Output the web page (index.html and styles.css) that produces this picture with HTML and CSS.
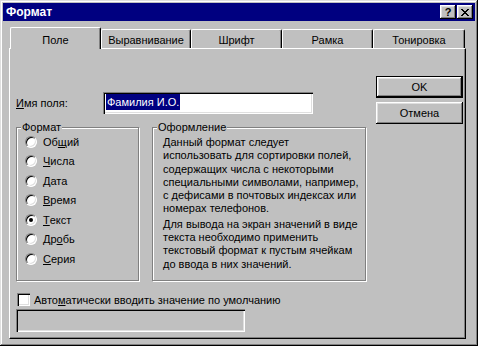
FILE: index.html
```html
<!DOCTYPE html>
<html lang="ru">
<head>
    <meta charset="UTF-8">
    <title>Формат</title>
    <link rel="stylesheet" href="styles.css">
</head>
<body>

    <div class="window">
        <div class="titlebar">
            <span class="title">Формат</span>
            <div class="caption-buttons">
                <span class="cap-btn help">?</span>
                <span class="cap-btn">
                    <svg width="8" height="7" viewBox="0 0 8 7" shape-rendering="crispEdges">
                        <path d="M0 0h2v1H0zM6 0h2v1H6zM1 1h2v1H1zM5 1h2v1H5zM2 2h4v1H2zM3 3h2v1H3zM2 4h4v1H2zM1 5h2v1H1zM5 5h2v1H5zM0 6h2v1H0zM6 6h2v1H6z" fill="#000"/>
                    </svg>
                </span>
            </div>
        </div>

        <div class="body">
            <div class="tabs">
                <div class="tab active" style="width:91px">Поле</div>
                <div class="tab" style="width:90px">Выравнивание</div>
                <div class="tab" style="width:91px">Шрифт</div>
                <div class="tab" style="width:91px">Рамка</div>
                <div class="tab" style="width:92px">Тонировка</div>
            </div>

            <div class="panel">
                <div class="main">
                    <div class="field-row">
                        <span class="field-label"><u>И</u>мя поля:</span>
                        <div class="textbox"><span class="selection">Фамилия И.О.</span></div>
                    </div>

                    <div class="groups">
                        <fieldset class="group format-group">
                            <legend>Формат</legend>
                            <div class="radio-list">
                                <div class="radio-item"><span class="radio"></span>Об<u>щ</u>ий</div>
                                <div class="radio-item"><span class="radio"></span><u>Ч</u>исла</div>
                                <div class="radio-item"><span class="radio"></span><u>Д</u>ата</div>
                                <div class="radio-item"><span class="radio"></span><u>В</u>ремя</div>
                                <div class="radio-item"><span class="radio checked"></span><u>Т</u>екст</div>
                                <div class="radio-item"><span class="radio"></span>Др<u>о</u>бь</div>
                                <div class="radio-item"><span class="radio"></span><u>С</u>ерия</div>
                            </div>
                        </fieldset>

                        <fieldset class="group design-group">
                            <legend>Оформление</legend>
                            <div class="design-text">
                                <p>Данный формат следует<br>использовать для сортировки полей,<br>содержащих числа с некоторыми<br>специальными символами, например,<br>с дефисами в почтовых индексах или<br>номерах телефонов.</p>
                                <p>Для вывода на экран значений в виде<br>текста необходимо применить<br>текстовый формат к пустым ячейкам<br>до ввода в них значений.</p>
                            </div>
                        </fieldset>
                    </div>

                    <div class="check-row">
                        <span class="checkbox"></span>Авто<u>м</u>атически вводить значение по умолчанию
                    </div>
                    <div class="textbox disabled"></div>
                </div>

                <div class="buttons">
                    <button class="btn default">OK</button>
                    <button class="btn">Отмена</button>
                </div>
            </div>
        </div>
    </div>

</body>
</html>
```

FILE: styles.css
```css
body {
    margin: 0;
    font-family: "Liberation Sans", Arial, sans-serif;
    font-size: 11px;
    color: #000;
    background-color: #c0c0c0;
}
.window {
    width: 478px;
    height: 346px;
    box-sizing: border-box;
    padding: 3px;
    background: #c0c0c0;
    box-shadow: inset -1px -1px #000, inset 1px 1px #dfdfdf, inset -2px -2px #808080, inset 2px 2px #fff;
}
.titlebar {
    height: 18px;
    background: #000080;
    color: #fff;
    display: flex;
    align-items: center;
    justify-content: space-between;
    padding: 0 2px 0 3px;
}
.title {
    font-weight: bold;
    font-size: 12px;
}
.caption-buttons {
    display: flex;
    gap: 1px;
}
.cap-btn {
    width: 16px;
    height: 14px;
    box-sizing: border-box;
    background: #c0c0c0;
    box-shadow: inset -1px -1px #000, inset 1px 1px #fff, inset -2px -2px #808080, inset 2px 2px #dfdfdf;
    display: flex;
    align-items: center;
    justify-content: center;
    color: #000;
}
.cap-btn.help {
    font-weight: bold;
    font-size: 11px;
    line-height: 14px;
}
.body {
    padding: 6px 9px 0 6px;
}
.tabs {
    display: flex;
    align-items: flex-end;
    height: 21px;
    padding-left: 1px;
}
.tab {
    height: 19px;
    box-sizing: border-box;
    border-top: 1px solid #fff;
    border-left: 1px solid #fff;
    border-right: 1px solid #000;
    border-radius: 2px 2px 0 0;
    box-shadow: inset -1px 0 #808080;
    text-align: center;
    padding-top: 2px;
    line-height: 16px;
    white-space: nowrap;
}
.tab.active {
    height: 22px;
    margin-bottom: -1px;
    padding-top: 4px;
    position: relative;
    z-index: 1;
    background: #c0c0c0;
}
.panel {
    height: 291px;
    box-sizing: border-box;
    border-top: 1px solid #fff;
    border-left: 1px solid #fff;
    border-right: 1px solid #000;
    border-bottom: 1px solid #000;
    box-shadow: inset -1px -1px #808080;
    display: flex;
    padding: 0 2px 0 6px;
}
.main {
    flex: 1;
}
.field-row {
    display: flex;
    align-items: center;
    height: 22px;
    margin-top: 43px;
}
.field-label {
    width: 87px;
}
.textbox {
    width: 210px;
    height: 22px;
    box-sizing: border-box;
    background: #fff;
    padding: 2px 3px;
    box-shadow: inset 1px 1px #808080, inset 2px 2px #000, inset -1px -1px #fff, inset -2px -2px #dfdfdf;
}
.selection {
    display: inline-block;
    background: #000080;
    color: #fff;
    line-height: 16px;
    padding: 0 1px;
}
.textbox.disabled {
    width: 229px;
    height: 23px;
    margin-top: 3px;
    background: #c0c0c0;
}
.groups {
    display: flex;
    margin-top: 7px;
}
.group {
    margin: 0;
    padding: 0;
    min-width: 0;
    height: 160px;
    box-sizing: border-box;
    border: 1px solid #808080;
    box-shadow: inset 1px 1px #fff, 1px 1px #fff;
}
.group legend {
    margin-left: 4px;
    padding: 0 1px;
    line-height: 13px;
    background: #c0c0c0;
}
.format-group {
    width: 123px;
    margin-right: 13px;
}
.design-group {
    width: 214px;
}
.radio-list {
    margin-top: -2px;
}
.radio-item {
    display: flex;
    align-items: center;
    height: 19.5px;
    padding-left: 8px;
}
.radio {
    width: 12px;
    height: 12px;
    box-sizing: border-box;
    border-radius: 50%;
    background: #fff;
    border: 1px solid;
    border-color: #808080 #fff #fff #808080;
    box-shadow: inset 1px 1px #000, inset -1px -1px #dfdfdf;
    margin-right: 6px;
    display: flex;
    align-items: center;
    justify-content: center;
}
.radio.checked::after {
    content: "";
    width: 4px;
    height: 4px;
    border-radius: 50%;
    background: #000;
}
.design-text {
    padding: 2px 0 0 10px;
    line-height: 13.3px;
    white-space: nowrap;
}
.design-text p {
    margin: 0 0 2px;
}
.check-row {
    display: flex;
    align-items: center;
    height: 13px;
    margin-top: 12px;
    padding-left: 1px;
}
.checkbox {
    width: 13px;
    height: 13px;
    box-sizing: border-box;
    background: #fff;
    box-shadow: inset 1px 1px #808080, inset 2px 2px #000, inset -1px -1px #fff, inset -2px -2px #dfdfdf;
    margin-right: 4px;
}
.buttons {
    width: 87px;
    padding-top: 27px;
    display: flex;
    flex-direction: column;
    gap: 4px;
}
.btn {
    height: 22px;
    margin: 0;
    padding: 0;
    font-family: inherit;
    font-size: 11px;
    color: #000;
    background: #c0c0c0;
    border: none;
    box-shadow: inset -1px -1px #000, inset 1px 1px #fff, inset -2px -2px #808080, inset 2px 2px #dfdfdf;
}
.btn.default {
    border: 1px solid #000;
}
```
